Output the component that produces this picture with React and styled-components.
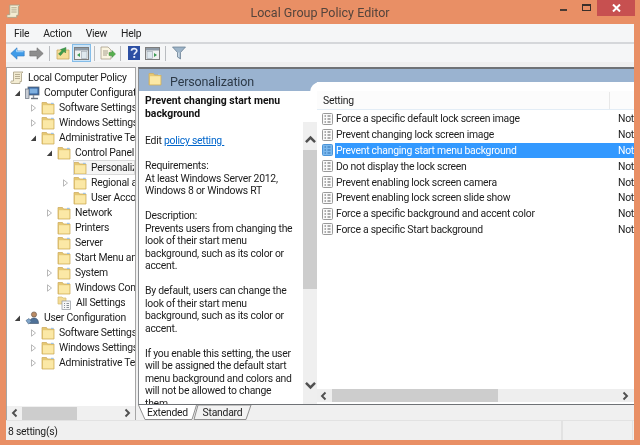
import React from 'react'
import styled, { createGlobalStyle } from 'styled-components'

const GlobalStyle = createGlobalStyle`
    html, body { margin: 0; padding: 0; background: #e98f65; }
    * { box-sizing: border-box; }
`;

const FONT = `Roboto, "Open Sans", "Liberation Sans", sans-serif`;

const FolderIcon = () => (
    <svg width="14" height="14" viewBox="0 0 14 14">
        <path d="M1 3.5V1.5h4.5l1 1.5H13v10H1z" fill="#e6c873" stroke="#cfae62" strokeWidth="0.8" />
        <rect x="2" y="4.2" width="10.4" height="8.2" fill="#fbe8a6" />
        <rect x="10" y="1.8" width="2.6" height="1.2" fill="#9fc3e6" />
    </svg>
);

const ScrollIcon = ({ size = 14 }) => (
    <svg width={size} height={size} viewBox="0 0 14 14">
        <path d="M3.5 1h9.5l-1.5 1.5v8H10v2H1.5c-1-.8-1-2 0-2.5h2z" fill="#f3ecd2" stroke="#a89f84" strokeWidth="0.8" />
        <path d="M5 3.5h5M5 5.5h5M5 7.5h5" stroke="#a89f84" strokeWidth="0.8" />
    </svg>
);

const ComputerIcon = () => (
    <svg width="15" height="14" viewBox="0 0 15 14">
        <rect x="3" y="1" width="11" height="8" fill="#2f5f9e" stroke="#5f6b7a" strokeWidth="0.8" />
        <rect x="4.5" y="2.5" width="8" height="5" fill="#7fb0e0" />
        <rect x="0.5" y="3" width="3.5" height="9.5" fill="#c9ced6" stroke="#67707c" strokeWidth="0.7" />
        <path d="M6 12.5h7" stroke="#67707c" strokeWidth="1.4" />
        <path d="M8.5 9v3" stroke="#8b939e" strokeWidth="1.4" />
    </svg>
);

const UserIcon = () => (
    <svg width="15" height="14" viewBox="0 0 15 14">
        <circle cx="9" cy="3.5" r="2.6" fill="#b98a63" stroke="#5f5148" strokeWidth="0.6" />
        <path d="M4.5 12.5c0-4 2-5.5 4.5-5.5s4.5 1.500 4.500 5.500z" fill="#4f7198" stroke="#3b4f68" strokeWidth="0.6" />
        <path d="M1 9.500 4 7.500l2.500 3-3 2.500z" fill="#7fa4c9" stroke="#4a6685" strokeWidth="0.6" />
    </svg>
);

const AllSettingsIcon = () => (
    <svg width="15" height="14" viewBox="0 0 15 14">
        <path d="M1 2.500V1h4l1 1h3v6H1z" fill="#f4dc96" stroke="#d3b970" strokeWidth="0.7" />
        <rect x="5" y="5" width="8.500" height="8.500" fill="#f7f7f7" stroke="#8f959c" strokeWidth="0.7" />
        <path d="M7 7.500h1M9.500 7.500h2.500M7 9.500h1M9.500 9.500h2.500M7 11.500h1M9.500 11.500h2.500" stroke="#6f7780" strokeWidth="0.8" />
    </svg>
);

const SettingIcon = ({ selected }) => (
    <svg width="11" height="12" viewBox="0 0 11 12">
        <rect x="0.5" y="0.5" width="10" height="11" rx="1" fill={selected ? '#7ab8ee' : '#fafafa'} stroke={selected ? '#4b94d8' : '#9a9a9a'} />
        <path d="M2.500 3h1.500M5.500 3h3M2.500 6h1.500M5.500 6h3M2.500 9h1.500M5.500 9h3" stroke={selected ? '#2f6fb0' : '#5d5d5d'} strokeWidth="1" />
    </svg>
);

const Arrow = ({ open }) => (
    <svg width="7" height="8" viewBox="0 0 7 8">
        {open
            ? <path d="M6 1.500V7H.8z" fill="#404040" />
            : <path d="M1.500.8 5.500 4l-4 3.200z" fill="#fff" stroke="#a6a6a6" strokeWidth="0.8" />}
    </svg>
);

const Chevron = ({ dir, size = 10 }) => {
    const paths = {
        up: 'M1.500 7 5 3.500 8.500 7',
        down: 'M1.500 3 5 6.500 8.500 3',
        left: 'M6.500 1.500 3 5 6.500 8.500',
        right: 'M3.500 1.500 7 5 3.500 8.500',
    };
    return (
        <svg width={size} height={size} viewBox="0 0 10 10">
            <path d={paths[dir]} fill="none" stroke="#505050" strokeWidth="1.900" />
        </svg>
    );
};

const BackIcon = () => (
    <svg width="15" height="13" viewBox="0 0 15 13">
        <path d="M7 .8.800 6.500 7 12.200V9h7.200V4H7z" fill="#3f9be8" stroke="#2f78c0" strokeWidth="0.6" />
        <path d="M6.500 2.500v2.200h7" fill="none" stroke="#a9d8fa" strokeWidth="1" />
    </svg>
);

const ForwardIcon = () => (
    <svg width="15" height="13" viewBox="0 0 15 13">
        <path d="M8 .8l6.200 5.700L8 12.200V9H.800V4H8z" fill="#8d8d8d" stroke="#6f6f6f" strokeWidth="0.6" />
    </svg>
);

const UpFolderIcon = () => (
    <svg width="14" height="14" viewBox="0 0 14 14">
        <path d="M1 4h12v9H1z" fill="#f6de98" stroke="#c9a95f" strokeWidth="0.8" />
        <path d="M2.500 8 6 4.500 4.500 3.500 10 1.500 9.500 7 8 5.500 4.500 9.500z" fill="#3f9d4a" stroke="#2f7f3a" strokeWidth="0.5" />
    </svg>
);

const TreeToggleIcon = () => (
    <svg width="15" height="13" viewBox="0 0 15 13">
        <rect x="0.500" y="0.500" width="14" height="12" fill="#f1f1f1" stroke="#7d7d7d" />
        <rect x="1" y="1" width="13" height="2.500" fill="#8e9aa6" />
        <rect x="7.500" y="4.500" width="5.500" height="7" fill="#dfe8ee" stroke="#9aa4ad" strokeWidth="0.6" />
        <path d="M6 6v4L3 8z" fill="#3e9c54" />
    </svg>
);

const ExportIcon = () => (
    <svg width="16" height="14" viewBox="0 0 16 14">
        <path d="M1 1h7l3 3v9H1z" fill="#faf5e2" stroke="#a8a08a" strokeWidth="0.8" />
        <path d="M3 5h5M3 7h5M3 9h4" stroke="#8f8a78" strokeWidth="0.8" />
        <path d="M9 6.500h3V4.500L15.500 8 12 11.500v-2H9z" fill="#57b04f" stroke="#3d8a3a" strokeWidth="0.5" />
    </svg>
);

const HelpIcon = () => (
    <svg width="12" height="14" viewBox="0 0 12 14">
        <rect width="12" height="14" fill="#2c4fa3" />
        <path d="M3.500 4.800C3.500 1.800 8.800 1.800 8.800 4.700 8.800 6.600 6.200 6.600 6.200 8.800" fill="none" stroke="#e8eefb" strokeWidth="1.700" />
        <rect x="5.300" y="10" width="1.900" height="1.900" fill="#e8eefb" />
    </svg>
);

const PropsIcon = () => (
    <svg width="15" height="13" viewBox="0 0 15 13">
        <rect x="0.500" y="0.500" width="14" height="12" fill="#f1f1f1" stroke="#7d7d7d" />
        <rect x="1" y="1" width="13" height="2.500" fill="#8e9aa6" />
        <rect x="2" y="4.500" width="5.500" height="7" fill="#dfe8ee" stroke="#9aa4ad" strokeWidth="0.6" />
        <path d="M9 6v4l3-2z" fill="#3e9c54" />
    </svg>
);

const FilterIcon = () => (
    <svg width="14" height="14" viewBox="0 0 14 14">
        <path d="M.5 1h13L8.500 6.500V13L5.500 11V6.500z" fill="#9db4c8" stroke="#62788c" strokeWidth="0.7" />
        <path d="M6.800 6.500V11" stroke="#dbe5ee" strokeWidth="1" />
    </svg>
);

const TitleAppIcon = () => <ScrollIcon size={15} />;

const treeRows = [
    { depth: 0, label: 'Local Computer Policy', icon: 'scroll' },
    { depth: 1, label: 'Computer Configuration', icon: 'computer', arrow: 'open' },
    { depth: 2, label: 'Software Settings', arrow: 'closed' },
    { depth: 2, label: 'Windows Settings', arrow: 'closed' },
    { depth: 2, label: 'Administrative Templates', arrow: 'open' },
    { depth: 3, label: 'Control Panel', arrow: 'open' },
    { depth: 4, label: 'Personalization', selected: true },
    { depth: 4, label: 'Regional and Language', arrow: 'closed' },
    { depth: 4, label: 'User Accounts' },
    { depth: 3, label: 'Network', arrow: 'closed' },
    { depth: 3, label: 'Printers' },
    { depth: 3, label: 'Server' },
    { depth: 3, label: 'Start Menu and Taskbar' },
    { depth: 3, label: 'System', arrow: 'closed' },
    { depth: 3, label: 'Windows Components', arrow: 'closed' },
    { depth: 3, label: 'All Settings', icon: 'all' },
    { depth: 1, label: 'User Configuration', icon: 'user', arrow: 'open' },
    { depth: 2, label: 'Software Settings', arrow: 'closed' },
    { depth: 2, label: 'Windows Settings', arrow: 'closed' },
    { depth: 2, label: 'Administrative Templates', arrow: 'closed' },
];

const treeIcons = {
    scroll: <ScrollIcon />,
    computer: <ComputerIcon />,
    user: <UserIcon />,
    all: <AllSettingsIcon />,
};

const settings = [
    'Force a specific default lock screen image',
    'Prevent changing lock screen image',
    'Prevent changing start menu background',
    'Do not display the lock screen',
    'Prevent enabling lock screen camera',
    'Prevent enabling lock screen slide show',
    'Force a specific background and accent color',
    'Force a specific Start background',
];

const descLines = [
    '',
    'Requirements:',
    'At least Windows Server 2012,',
    'Windows 8 or Windows RT',
    '',
    'Description:',
    'Prevents users from changing the',
    'look of their start menu',
    'background, such as its color or',
    'accent.',
    '',
    'By default, users can change the',
    'look of their start menu',
    'background, such as its color or',
    'accent.',
    '',
    'If you enable this setting, the user',
    'will be assigned the default start',
    'menu background and colors and',
    'will not be allowed to change',
    'them.',
];

const App = () => {
    return (
        <Page>
            <GlobalStyle />
            <TitleBar>
                <AppIconBox><TitleAppIcon /></AppIconBox>
                <Title>Local Group Policy Editor</Title>
                <WindowButtons>
                    <MinButton />
                    <MaxButton />
                    <CloseButton>
                        <svg width="9" height="8" viewBox="0 0 9 8">
                            <path d="M1 .5 8 7.500M8 .5 1 7.500" stroke="#fff" strokeWidth="2" />
                        </svg>
                    </CloseButton>
                </WindowButtons>
            </TitleBar>

            <Frame>
                <MenuBar>
                    <MenuItem>File</MenuItem>
                    <MenuItem>Action</MenuItem>
                    <MenuItem>View</MenuItem>
                    <MenuItem>Help</MenuItem>
                </MenuBar>

                <Toolbar>
                    <ToolButton><BackIcon /></ToolButton>
                    <ToolButton><ForwardIcon /></ToolButton>
                    <ToolSep />
                    <ToolButton><UpFolderIcon /></ToolButton>
                    <ToolButton $active><TreeToggleIcon /></ToolButton>
                    <ToolSep />
                    <ToolButton><ExportIcon /></ToolButton>
                    <ToolSep />
                    <ToolButton><HelpIcon /></ToolButton>
                    <ToolButton><PropsIcon /></ToolButton>
                    <ToolSep />
                    <ToolButton><FilterIcon /></ToolButton>
                </Toolbar>

                <Main>
                    <TreePane>
                        <TreeList>
                            {treeRows.map((row, i) => (
                                <TreeRow key={i} $depth={row.depth}>
                                    {row.depth > 0 && (
                                        <ArrowBox>{row.arrow && <Arrow open={row.arrow === 'open'} />}</ArrowBox>
                                    )}
                                    <TreeItem $selected={row.selected}>
                                        {row.icon ? treeIcons[row.icon] : <FolderIcon />}
                                        <TreeLabel>{row.label}</TreeLabel>
                                    </TreeItem>
                                </TreeRow>
                            ))}
                        </TreeList>
                        <HScroll>
                            <Chevron dir="left" />
                            <TreeThumb />
                            <Chevron dir="right" />
                        </HScroll>
                    </TreePane>

                    <RightPane>
                        <Content>
                            <DetailColumn>
                                <PaneTitle>
                                    <FolderIcon />
                                    <PaneName>Personalization</PaneName>
                                </PaneTitle>
                                <DetailBody>
                                    <DetailText>
                                        <DetailHeading>Prevent changing start menu</DetailHeading>
                                        <DetailHeading>background</DetailHeading>
                                        <DetailGap />
                                        <DetailLine>
                                            Edit <PolicyLink>policy setting </PolicyLink>
                                        </DetailLine>
                                        {descLines.map((line, i) => (
                                            <DetailLine key={i}>{line}</DetailLine>
                                        ))}
                                    </DetailText>
                                    <VScroll>
                                        <Chevron dir="up" size={13} />
                                        <VThumb />
                                        <VRest />
                                        <Chevron dir="down" size={13} />
                                    </VScroll>
                                </DetailBody>
                            </DetailColumn>

                            <ListCard>
                                <ListHead>
                                    <HeadName>Setting</HeadName>
                                    <HeadState />
                                </ListHead>
                                <ListBody>
                                    {settings.map((name, i) => (
                                        <SettingRow key={name}>
                                            <SettingIcon selected={i === 2} />
                                            <SettingCells $selected={i === 2}>
                                                <SettingName>{name}</SettingName>
                                                <SettingState>Not configured</SettingState>
                                            </SettingCells>
                                        </SettingRow>
                                    ))}
                                </ListBody>
                                <ListScroll>
                                    <Chevron dir="left" />
                                    <ListThumb />
                                    <Chevron dir="right" />
                                </ListScroll>
                            </ListCard>
                        </Content>

                        <TabStrip>
                            <Tab $active>
                                <TabShape width="59" height="15" viewBox="0 0 59 15">
                                    <path d="M.5 0 7 14.500H54L58.500 0" fill="#fff" stroke="#8f8f8f" />
                                </TabShape>
                                <TabLabel>Extended</TabLabel>
                            </Tab>
                            <Tab>
                                <TabShape width="59" height="15" viewBox="0 0 59 15">
                                    <path d="M1 14.500 5 0H58L53 14.500z" fill="#f2f2f2" stroke="#8f8f8f" />
                                </TabShape>
                                <TabLabel>Standard</TabLabel>
                            </Tab>
                        </TabStrip>
                    </RightPane>
                </Main>

                <StatusBar>
                    <StatusText>8 setting(s)</StatusText>
                    <StatusCell />
                    <StatusEnd />
                </StatusBar>
            </Frame>
        </Page>
    )
}

export default App

const Page = styled.div`
    width: 640px;
    height: 445px;
    overflow: hidden;
    background: #e98f65;
    font-family: ${FONT};
    font-size: 10.4px;
    letter-spacing: -0.25px;
    color: #1c1c1c;
    filter: blur(0.3px);
`;

const TitleBar = styled.div`
    position: relative;
    height: 24px;
    display: flex;
    align-items: center;
    justify-content: center;
`;

const AppIconBox = styled.div`
    position: absolute;
    left: 6px;
    top: 4px;
`;

const Title = styled.div`
    font-size: 12.5px;
    letter-spacing: 0;
    color: #54443c;
`;

const WindowButtons = styled.div`
    position: absolute;
    top: 0;
    left: 560px;
    display: flex;
    align-items: flex-start;
`;

const MinButton = styled.div`
    width: 7px;
    height: 2px;
    margin-top: 9px;
    background: #4a3a33;
`;

const MaxButton = styled.div`
    width: 9px;
    height: 7px;
    margin: 4px 0 0 15px;
    border: 1px solid #3b2f2a;
    border-top-width: 2px;
`;

const CloseButton = styled.div`
    width: 38px;
    height: 16px;
    margin-left: 6px;
    background: #c75050;
    display: flex;
    align-items: center;
    justify-content: center;
`;

const Frame = styled.div`
    width: 628px;
    height: 416px;
    margin-left: 6px;
    background: #f0f0f0;
    display: flex;
    flex-direction: column;
`;

const MenuBar = styled.div`
    height: 20px;
    display: flex;
    align-items: center;
    gap: 14px;
    padding: 0 0 0 8px;
    background: #f5f6f7;
    border-bottom: 2px solid #d5d7da;
`;

const MenuItem = styled.div`
    color: #222;
`;

const Toolbar = styled.div`
    height: 23px;
    padding: 0 0 5px 2px;
    display: flex;
    align-items: center;
    background: linear-gradient(#f5f6f7 0 18px, #efefef 18px);
`;

const ToolButton = styled.div`
    height: 18px;
    min-width: 19px;
    display: flex;
    align-items: center;
    justify-content: center;
    background: ${(p) => (p.$active ? '#cce4f7' : 'transparent')};
    border: 1px solid ${(p) => (p.$active ? '#84bde9' : 'transparent')};
`;

const ToolSep = styled.div`
    width: 1px;
    height: 15px;
    margin: 0 3px;
    background: #b9bcc0;
`;

const Main = styled.div`
    flex: 1;
    min-height: 0;
    display: flex;
`;

const TreePane = styled.div`
    width: 130px;
    background: #fff;
    border: 1px solid #a5a5a5;
    border-bottom: 0;
    display: flex;
    flex-direction: column;
`;

const TreeList = styled.div`
    flex: 1;
    min-height: 0;
    padding-top: 2px;
    overflow: hidden;
`;

const TreeRow = styled.div`
    height: 15px;
    display: flex;
    align-items: center;
    padding-left: ${(p) => (p.$depth === 0 ? 3 : 16 * p.$depth - 9)}px;
`;

const ArrowBox = styled.div`
    width: 11px;
    flex: none;
    display: flex;
    justify-content: flex-start;
`;

const TreeItem = styled.div`
    flex: 1;
    min-width: 0;
    height: 15px;
    display: flex;
    align-items: center;
    gap: 4px;
    background: ${(p) => (p.$selected ? '#f5f5f5' : 'transparent')};
    outline: ${(p) => (p.$selected ? '1px solid #dadada' : 'none')};
    outline-offset: -1px;
    svg {
        flex: none;
    }
`;

const TreeLabel = styled.span`
    white-space: nowrap;
    overflow: hidden;
`;

const HScroll = styled.div`
    height: 14px;
    flex: none;
    background: #f0f0f0;
    display: flex;
    align-items: center;
    justify-content: space-between;
    padding: 0 3px;
`;

const TreeThumb = styled.div`
    width: 55px;
    height: 13px;
    margin-right: auto;
    margin-left: 2px;
    background: #cdcdcd;
`;

const RightPane = styled.div`
    flex: 1;
    min-width: 0;
    margin-left: 2px;
    display: flex;
    flex-direction: column;
`;

const Content = styled.div`
    flex: 1;
    min-height: 0;
    display: flex;
    background: #9ab3d0;
    border-top: 2px solid #6f7276;
    border-left: 1px solid #8a8d91;
    border-bottom: 1px solid #6f7276;
    overflow: hidden;
`;

const DetailColumn = styled.div`
    width: 178px;
    flex: none;
    display: flex;
    flex-direction: column;
`;

const PaneTitle = styled.div`
    height: 22px;
    flex: none;
    display: flex;
    align-items: center;
    gap: 8px;
    padding-left: 9px;
    svg {
        margin-bottom: 2px;
    }
`;

const PaneName = styled.div`
    font-size: 12.5px;
    letter-spacing: -0.15px;
    color: #2d3a48;
    padding-top: 3px;
`;

const DetailBody = styled.div`
    flex: 1;
    min-height: 0;
    display: flex;
    background: #fff;
`;

const DetailText = styled.div`
    width: 164px;
    flex: none;
    padding: 4px 0 0 6px;
    overflow: hidden;
`;

const DetailLine = styled.div`
    height: 12.5px;
    line-height: 12.5px;
    white-space: nowrap;
`;

const DetailHeading = styled(DetailLine)`
    font-weight: 700;
    letter-spacing: 0;
    color: #111;
`;

const DetailGap = styled.div`
    height: 15px;
`;

const PolicyLink = styled.span`
    color: #0066cc;
    text-decoration: underline;
    white-space: pre;
`;

const VScroll = styled.div`
    position: relative;
    z-index: 1;
    width: 14px;
    margin-top: 31px;
    background: #efefef;
    display: flex;
    flex-direction: column;
    align-items: center;
    padding: 11px 0 12px;
`;

const VThumb = styled.div`
    width: 100%;
    height: 139px;
    flex: none;
    margin-top: 4px;
    background: #cdcdcd;
`;

const VRest = styled.div`
    flex: 1;
`;

const ListCard = styled.div`
    flex: 1;
    min-width: 0;
    margin: 13px 0 0 -7px;
    padding-left: 7px;
    background: #fff;
    border-top-left-radius: 10px;
    display: flex;
    flex-direction: column;
`;

const ListHead = styled.div`
    height: 28px;
    flex: none;
    padding-top: 10px;
    display: flex;
    background: linear-gradient(#fff 0 9px, #fcfcfc 9px);
    border-bottom: 1px solid #e3edf6;
`;

const HeadName = styled.div`
    width: 292px;
    padding-left: 6px;
    line-height: 17px;
`;

const HeadState = styled.div`
    flex: 1;
    border-left: 1px solid #e8e8e8;
`;

const ListBody = styled.div`
    flex: 1;
    min-height: 0;
    padding: 1px 0 0 5px;
    overflow: hidden;
`;

const SettingRow = styled.div`
    height: 15.8px;
    display: flex;
    align-items: center;
    gap: 2px;
`;

const SettingCells = styled.div`
    flex: 1;
    min-width: 0;
    height: 15px;
    display: flex;
    align-items: center;
    overflow: hidden;
    padding-left: 1px;
    color: ${(p) => (p.$selected ? '#fff' : '#222')};
    background: ${(p) => (p.$selected ? '#3399ff' : 'transparent')};
`;

const SettingName = styled.div`
    width: 282px;
    flex: none;
    white-space: nowrap;
`;

const SettingState = styled.div`
    white-space: nowrap;
`;

const ListScroll = styled.div`
    height: 13px;
    flex: none;
    margin: 0 0 2px;
    background: #eeeeee;
    display: flex;
    align-items: center;
    justify-content: space-between;
    padding: 0 4px 0 2px;
`;

const ListThumb = styled.div`
    width: 166px;
    height: 13px;
    margin-left: 3px;
    margin-right: auto;
    background: #cdcdcd;
`;

const TabStrip = styled.div`
    height: 15px;
    flex: none;
    display: flex;
`;

const Tab = styled.div`
    position: relative;
    z-index: ${(p) => (p.$active ? 1 : 0)};
    width: 59px;
    margin-left: ${(p) => (p.$active ? 0 : -4)}px;
    display: flex;
    align-items: center;
    justify-content: center;
`;

const TabShape = styled.svg`
    position: absolute;
    left: 0;
    top: 0;
`;

const TabLabel = styled.span`
    position: relative;
    line-height: 14px;
`;

const StatusBar = styled.div`
    height: 20px;
    flex: none;
    display: flex;
    align-items: center;
    border-top: 1px solid #e2e2e2;
    background: #f0f0f0;
`;

const StatusText = styled.div`
    width: 555px;
    padding: 2px 0 0 2px;
`;

const StatusCell = styled.div`
    width: 71px;
    height: 100%;
    border-left: 2px solid #e2e2e2;
`;

const StatusEnd = styled.div`
    flex: 1;
    height: 100%;
    border-left: 1px solid #e2e2e2;
`;
